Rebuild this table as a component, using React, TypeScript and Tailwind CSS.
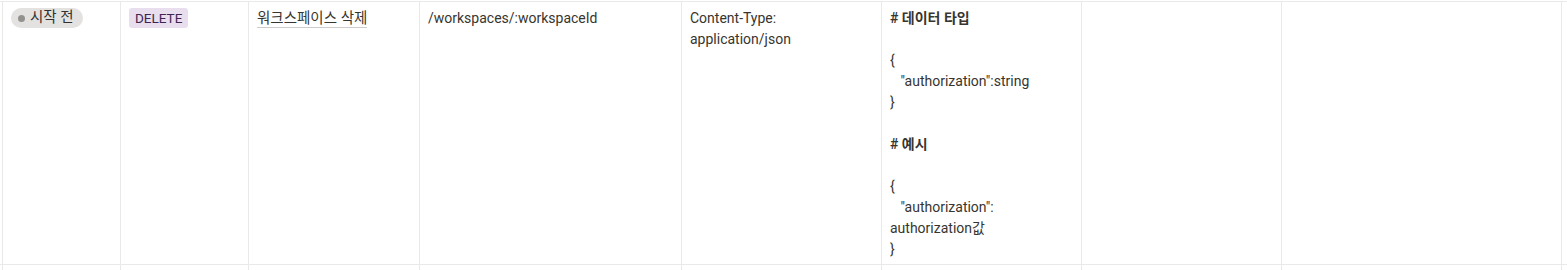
import React from 'react'

const font = 'font-["Segoe_UI",Roboto,"Noto_Sans_CJK_KR",sans-serif]'

const widths = ['w-[118px]', 'w-[128px]', 'w-[171px]', 'w-[262px]', 'w-[200px]', 'w-[200px]', 'w-[200px]', 'w-[280px]']

const Blank = () => <div className="h-[21px]" />

const App = () => {
    return (
        <div className={`${font} bg-white text-[#37352f] text-[14px] leading-[21px] pt-px h-[270px] overflow-hidden`}>
            <div className="flex w-full border-y border-[#e9e9e7] pl-[2px]">
                <div className="w-[118px] border-l border-[#e9e9e7] px-2 pt-[6px] h-[262px] shrink-0 flex items-start">
                    <span className="flex items-center h-5 rounded-full bg-[#e3e2e0] text-[#32302c] pl-[7px] pr-[9px] leading-5 whitespace-nowrap">
                        <span className="w-[7px] h-[7px] rounded-full bg-[#91918e] mr-[5px]" />
                        <span className="text-[14.5px]">시작 전</span>
                    </span>
                </div>
                <div className="w-[128px] border-l border-[#e9e9e7] px-2 pt-[6px] shrink-0 flex items-start">
                    <span className="flex items-center h-5 rounded-[3px] bg-[#e8deee] text-[#412454] px-[6px] leading-5 text-[13.5px]">
                        DELETE
                    </span>
                </div>
                <div className="w-[171px] border-l border-[#e9e9e7] px-2 pt-[6px] shrink-0">
                    <span className="border-b border-[#37352f40] text-[14.5px]">워크스페이스 삭제</span>
                </div>
                <div className="w-[262px] border-l border-[#e9e9e7] px-2 pt-[6px] shrink-0">
                    /workspaces/:workspaceId
                </div>
                <div className="w-[200px] border-l border-[#e9e9e7] px-2 pt-[6px] shrink-0">
                    <div>Content-Type:</div>
                    <div>application/json</div>
                </div>
                <div className="w-[200px] border-l border-[#e9e9e7] px-2 pt-[6px] shrink-0 whitespace-pre">
                    <div className="font-semibold"># 데이터 타입</div>
                    <Blank />
                    <div>{'{'}</div>
                    <div>{'   "authorization":string'}</div>
                    <div>{'}'}</div>
                    <Blank />
                    <div className="font-semibold"># 예시</div>
                    <Blank />
                    <div>{'{'}</div>
                    <div>{'   "authorization":'}</div>
                    <div>authorization값</div>
                    <div>{'}'}</div>
                </div>
                <div className="w-[200px] border-l border-[#e9e9e7] shrink-0" />
                <div className="w-[280px] border-l border-[#e9e9e7] shrink-0" />
                <div className="border-l border-[#e9e9e7] flex-1" />
            </div>
            <div className="flex w-full pl-[2px] h-[10px]">
                {widths.map((w, i) => (
                    <div key={i} className={`${w} border-l border-[#e9e9e7] shrink-0`} />
                ))}
                <div className="border-l border-[#e9e9e7] flex-1" />
            </div>
        </div>
    )
}

export default App
